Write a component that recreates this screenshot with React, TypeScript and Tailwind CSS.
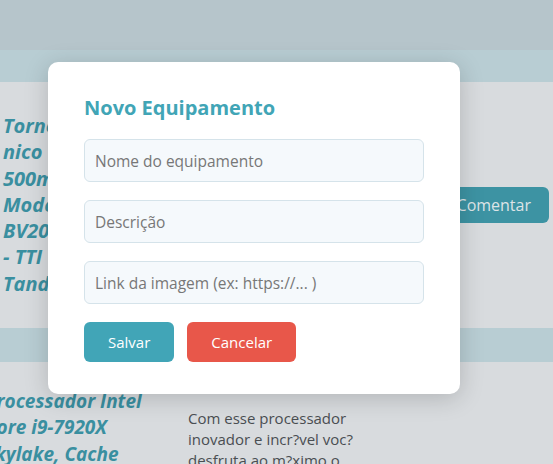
import { useState } from "react";

const font = { fontFamily: '"Open Sans", "Noto Sans", sans-serif' };

const fields = [
  { name: "nome", placeholder: "Nome do equipamento" },
  { name: "descricao", placeholder: "Descrição" },
  { name: "imagem", placeholder: "Link da imagem (ex: https://... )" },
];

export default function App() {
  const [values, setValues] = useState<Record<string, string>>({});

  return (
    <div className="relative h-[464px] w-[553px] overflow-hidden bg-[#b8cdd3]" style={font}>
      {/* page behind the overlay */}
      <header className="h-[50px] bg-[#b6c5cb]" />
      <main className="flex flex-col gap-[34px] pt-[32px]">
        <div className="flex h-[246px] items-center bg-[#d8dbde]">
          <h2 className="w-[160px] pl-[3px] text-[20px] leading-[26.3px] font-bold italic text-[#3a8fa0]">
            Torno mec?<br />nico<br />500mm<br />Modelo<br />BV20<br />- TTI<br />Tander
          </h2>
          <div className="flex-1" />
          <button className="mr-[4px] h-[36px] rounded-[6px] bg-[#3d93a3] pr-[18px] pl-[30px] text-[16px] text-[#dde4e7]">
            Comentar
          </button>
        </div>
        <div className="flex h-[200px] bg-[#d8dbde] pt-[26px]">
          <h2 className="ml-[-15px] w-[180px] shrink-0 text-[19px] leading-[26.3px] font-bold italic text-[#3a8fa0]">
            Processador Intel<br />Core i9-7920X<br />Skylake, Cache
          </h2>
          <p className="ml-[23px] mt-[20px] w-[180px] text-[15px] leading-[21px] text-[#4a4e52]">
            Com esse processador inovador e incr?vel voc? desfruta ao m?ximo o
          </p>
        </div>
      </main>

      {/* modal */}
      <div className="absolute top-[62px] left-[48px] w-[412px] rounded-[10px] bg-white px-[36px] pt-[32px] pb-[32px] shadow-[0_4px_24px_rgba(0,0,0,0.18)]">
        <h3 className="text-[20px] leading-[28px] font-bold text-[#41a5b6]">Novo Equipamento</h3>
        <div className="mt-[17px] flex flex-col gap-[18px]">
          {fields.map((f) => (
            <input
              key={f.name}
              value={values[f.name] ?? ""}
              onChange={(e) => setValues({ ...values, [f.name]: e.target.value })}
              placeholder={f.placeholder}
              className="h-[43px] w-full rounded-[6px] border border-[#d5e3ea] bg-[#f5f9fc] px-[10px] text-[15.5px] text-[#333] outline-none placeholder:text-[#777]"
            />
          ))}
        </div>
        <div className="mt-[18px] flex gap-[13px]">
          <button className="h-[40px] rounded-[6px] bg-[#41a5b7] px-[24px] text-[15px] text-white">Salvar</button>
          <button className="h-[40px] rounded-[6px] bg-[#e8574a] px-[24px] text-[15px] text-white">Cancelar</button>
        </div>
      </div>
    </div>
  );
}
